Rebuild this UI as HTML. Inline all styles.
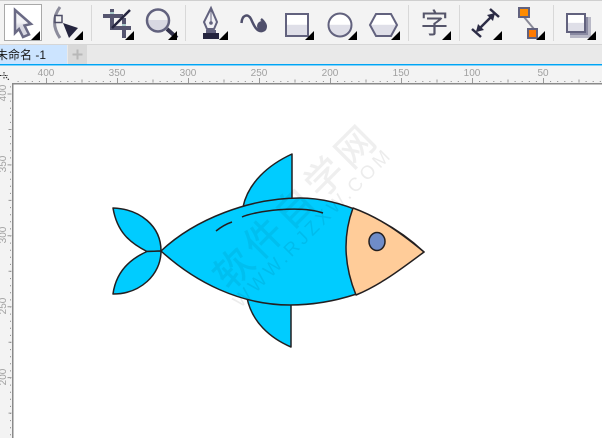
<!DOCTYPE html>
<html><head><meta charset="utf-8"><style>
html,body{margin:0;padding:0;background:#fff;width:602px;height:438px;overflow:hidden}
svg{display:block}
.r{font:10px "Liberation Sans",sans-serif;fill:#a0a0a0;text-anchor:middle}
</style></head><body>
<svg width="602" height="438" viewBox="0 0 602 438" xmlns="http://www.w3.org/2000/svg">
<defs>
<linearGradient id="g" x1="0" y1="0" x2="0" y2="1"><stop offset=".48" stop-color="#fff"/><stop offset=".5" stop-color="#dfdfe8"/></linearGradient>
<linearGradient id="a" x1="0" y1="0" x2="0" y2="1"><stop offset=".45" stop-color="#f2f2f6"/><stop offset=".6" stop-color="#d8d8e2"/></linearGradient>
</defs>
<rect width="602" height="438" fill="#fff"/>
<!-- toolbar -->
<rect width="602" height="45" fill="#f3f3f3"/>
<rect width="602" height="1" fill="#cfcfcf"/>
<rect y="44" width="602" height="1" fill="#d6d6d6"/>
<g fill="#d8d8d8"><rect x="91" y="5" width="1" height="36"/><rect x="185" y="5" width="1" height="36"/><rect x="408" y="5" width="1" height="36"/><rect x="459" y="5" width="1" height="36"/><rect x="553" y="5" width="1" height="36"/></g>
<rect x="4.5" y="4.5" width="37" height="36" fill="#fff" stroke="#a9a9a9"/>
<!-- pick -->
<path d="M15 10L31 24L24.500 25.500L29 34.500L23 37L19 29L15 33Z" fill="url(#a)" stroke="#6a6a85" stroke-width="2.500" stroke-linejoin="miter"/>
<!-- shape -->
<path d="M60 7Q49 22 60 38" fill="none" stroke="#8c8c9c" stroke-width="3"/>
<rect x="55" y="15.500" width="7" height="7" fill="#f3f3f3" stroke="#4c4c66" stroke-width="1.500"/>
<path d="M63 23L78 28L69 38Z" fill="#25253f"/>
<!-- crop -->
<g fill="#55556f"><rect x="103" y="14" width="20" height="4"/><rect x="110" y="9" width="4" height="21"/><rect x="110" y="26" width="21" height="4"/><rect x="122" y="18" width="4" height="20"/></g>
<path d="M112 28L130 10" stroke="#25253f" stroke-width="2.500"/>
<rect x="122" y="24" width="4" height="2" fill="#a8c8c8"/><rect x="110" y="12" width="4" height="2" fill="#a8c8c8"/>
<!-- zoom -->
<path d="M147 20H169A11 11 0 0 1 147 20Z" fill="#d8d8e2"/>
<circle cx="158" cy="20.500" r="11" fill="none" stroke="#62627e" stroke-width="2.500"/>
<path d="M167 29L177 38" stroke="#33334d" stroke-width="4"/>
<!-- pen -->
<path d="M211 8L217 22L214 29H207L204 22Z" fill="#f2f2f6" stroke="#62627e" stroke-width="2"/>
<path d="M211 9V22" stroke="#62627e"/><circle cx="211" cy="23" r="1.800" fill="#62627e"/>
<rect x="206" y="30" width="10" height="3" fill="#62627e"/>
<rect x="203" y="33" width="16" height="6" fill="#25253f"/>
<!-- artistic media -->
<path d="M241.500 23C242 15 248 13 251 19C254 26 257 32 262 31C267 30 267 24 261 19" fill="none" stroke="#4f4f6b" stroke-width="2.500"/>
<circle cx="262" cy="26" r="5" fill="#4f4f6b"/>
<!-- rect, ellipse, polygon -->
<rect x="286" y="14" width="22" height="22" fill="url(#g)" stroke="#62627e" stroke-width="2"/>
<circle cx="340" cy="25" r="11.500" fill="url(#g)" stroke="#62627e" stroke-width="2"/>
<path d="M370 25L376 14H391L397 25L391 36H376Z" fill="url(#g)" stroke="#62627e" stroke-width="2"/>
<!-- text -->
<text x="434.500" y="33" font-size="28" fill="#55556a" text-anchor="middle" font-family="'Noto Sans CJK SC',sans-serif">字</text>
<!-- dimension -->
<g stroke="#2c2c46" fill="none"><path d="M477 31L494 14" stroke-width="2.500"/><path d="M472 29L481 37M490 9L499 17" stroke-width="2.500"/></g>
<path d="M476 32L478 24L484 30ZM495 13L487 15L493 21Z" fill="#2c2c46"/>
<!-- connector -->
<path d="M524 17L534 29" stroke="#8a8a98" stroke-width="2"/>
<rect x="519" y="8" width="10" height="9" fill="#ff8c00" stroke="#62627e" stroke-width="2"/>
<rect x="528" y="29" width="9" height="9" fill="#ff7a00" stroke="#62627e" stroke-width="2"/>
<!-- shadow -->
<rect x="570" y="17" width="21" height="21" fill="#b8b8c6"/><rect x="570" y="17" width="18" height="18" fill="#8a8aa2"/>
<rect x="567" y="14" width="18" height="18" fill="url(#g)" stroke="#62627e" stroke-width="2"/>
<!-- flyout triangles -->
<g fill="#000"><path d="M31 40H40V31Z"/><path d="M74 40H83V31Z"/><path d="M125 40H134V31Z"/><path d="M168 40H177V31Z"/><path d="M219 40H228V31Z"/><path d="M305 40H314V31Z"/><path d="M348 40H357V31Z"/><path d="M391 40H400V31Z"/><path d="M442 40H451V31Z"/><path d="M493 40H502V31Z"/><path d="M536 40H545V31Z"/><path d="M587 40H596V31Z"/></g>
<!-- tab bar -->
<rect y="45" width="602" height="19" fill="#e9e9e9"/>
<rect y="45" width="67" height="19" fill="#cce4ff"/>
<rect x="68" y="45" width="19" height="19" fill="#d9d9d9"/>
<path d="M77.500 49.500V59.500M72.500 54.500H82.500" stroke="#b8b8b8" stroke-width="2"/>
<text x="-4" y="59" font-size="12" fill="#1a1a1a" font-family="'Liberation Sans','Noto Sans CJK SC',sans-serif">未命名 -1</text>
<rect y="64" width="602" height="1.500" fill="#00a4f4"/>
<!-- rulers -->
<rect y="66" width="602" height="17" fill="#f3f3f3"/>
<rect y="83" width="12" height="355" fill="#f3f3f3"/>
<g>
<text class="r" x="46" y="76">400</text><text class="r" x="117" y="76">350</text><text class="r" x="188" y="76">300</text><text class="r" x="259" y="76">250</text><text class="r" x="330" y="76">200</text><text class="r" x="401" y="76">150</text><text class="r" x="472" y="76">100</text><text class="r" x="543" y="76">50</text>
</g>
<line x1="17.600" y1="81.500" x2="602" y2="81.500" stroke="#888" stroke-dasharray="1 6.100"/>
<line x1="46" y1="80.500" x2="602" y2="80.500" stroke="#999" stroke-width="5" stroke-dasharray="1 70"/>
<line x1="81.500" y1="81" x2="602" y2="81" stroke="#999" stroke-width="3" stroke-dasharray="1 70"/>
<rect x="12" y="83" width="590" height="1.500" fill="#8a8a8a"/>
<rect x="12" y="83" width="1.500" height="355" fill="#8a8a8a"/>
<line x1="10.500" y1="86.400" x2="10.500" y2="438" stroke="#888" stroke-dasharray="1 6.100"/>
<line x1="9.500" y1="93.500" x2="9.500" y2="438" stroke="#999" stroke-width="4" stroke-dasharray="1 69.900"/>
<line x1="10" y1="129" x2="10" y2="438" stroke="#999" stroke-width="3" stroke-dasharray="1 69.900"/>
<g>
<text class="r" transform="translate(6 93) rotate(-90)">400</text>
<text class="r" transform="translate(6 164) rotate(-90)">350</text>
<text class="r" transform="translate(6 235) rotate(-90)">300</text>
<text class="r" transform="translate(6 306) rotate(-90)">250</text>
<text class="r" transform="translate(6 377) rotate(-90)">200</text>
</g>
<rect y="66" width="12" height="17" fill="#f3f3f3"/>
<path d="M4 72V79M0 75.500H3M5 75.500H8M6 77L9 80" stroke="#222" stroke-dasharray="1.500 1" fill="none"/>
<!-- fish -->
<g stroke="#231f20" stroke-width="1.500" stroke-linejoin="round" fill="#00ccff">
<path d="M243 207C248 183 268 165 292 154V200Z"/>
<path d="M247 298C252 322 270 338 291 347V303Z"/>
<path d="M113 208C140 209 161 226 161 251L147 251.500C130 243 117 232 113 208Z"/>
<path d="M161 251C161 275 140 294 113 294C116 272 130 259 147 251.500Z"/>
<path d="M161 251C195 219 250 198 300 198C340 198 390 220 424 252C395 270 380 283 355 294.500C335 301 315 305 290 305C240 305 195 282 161 251Z"/>
<path d="M353 208C342 238 345 268 356 295C380 285 400 270 424 252C395 228 375 216 353 208Z" fill="#ffcc99"/>
<ellipse cx="377" cy="241.500" rx="8" ry="9" fill="#6f8cc8"/>
<path d="M216 231C221 227 226 224 232 222M242 217C255 211 300 205 323 213" fill="none"/>
</g>
<!-- watermark -->
<g opacity=".06" transform="translate(305.500 215.500) rotate(-45)" font-family="'Noto Sans CJK SC',sans-serif" text-anchor="middle">
<text x="0" y="0" font-size="38" letter-spacing="5" fill="#000" stroke="#000" stroke-width=".6">软件自学网</text>
</g>
<g opacity=".07" transform="translate(317 232) rotate(-45)" font-family="'Liberation Sans',sans-serif" text-anchor="middle">
<text x="0" y="0" font-size="19" letter-spacing="3.400" fill="#000">WWW.RJZXW.COM</text>
</g>
</svg>
</body></html>
